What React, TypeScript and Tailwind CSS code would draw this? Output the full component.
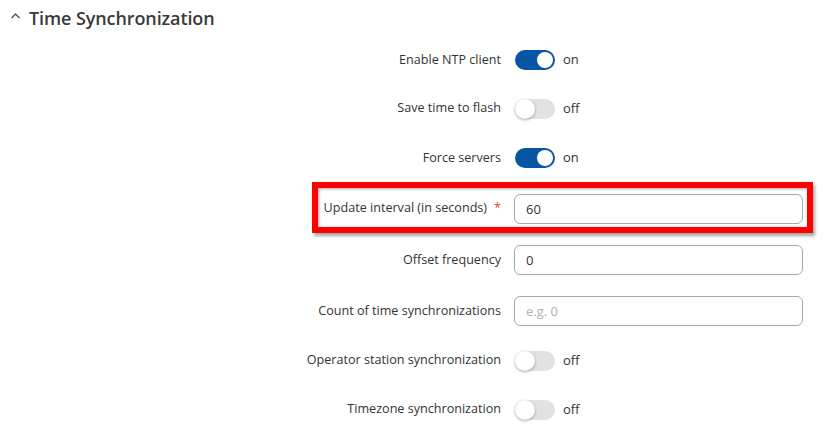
import React from 'react';

type Row =
  | { kind: 'toggle'; label: string; on: boolean; h: string }
  | { kind: 'input'; label: string; value?: string; placeholder?: string; required?: boolean; highlight?: boolean; h: string };

const rows: Row[] = [
  { kind: 'toggle', label: 'Enable NTP client', on: true, h: 'h-[48px]' },
  { kind: 'toggle', label: 'Save time to flash', on: false, h: 'h-[49px]' },
  { kind: 'toggle', label: 'Force servers', on: true, h: 'h-[50px]' },
  { kind: 'input', label: 'Update interval (in seconds)', value: '60', required: true, highlight: true, h: 'h-[51px]' },
  { kind: 'input', label: 'Offset frequency', value: '0', h: 'h-[52px]' },
  { kind: 'input', label: 'Count of time synchronizations', placeholder: 'e.g. 0', h: 'h-[50px]' },
  { kind: 'toggle', label: 'Operator station synchronization', on: false, h: 'h-[49px]' },
  { kind: 'toggle', label: 'Timezone synchronization', on: false, h: 'h-[49px]' },
];

const Toggle = ({ on }: { on: boolean }) => (
  <div className="flex items-center gap-2">
    {on ? (
      <div className="w-[40px] h-[20px] rounded-full bg-[#0756a3] flex items-center justify-end px-[2px]">
        <div className="w-[16px] h-[16px] rounded-full bg-white" />
      </div>
    ) : (
      <div className="w-[40px] h-[20px] rounded-full bg-[#e2e2e2] flex items-center">
        <div className="w-[20px] h-[20px] rounded-full bg-white shadow-[0_1px_3px_rgba(0,0,0,0.35)]" />
      </div>
    )}
    <span className="text-[13px] text-[#333]">{on ? 'on' : 'off'}</span>
  </div>
);

export default function App() {
  return (
    <div className="w-[826px] h-[444px] bg-white overflow-hidden text-[#333]" style={{ fontFamily: '"Open Sans", sans-serif' }}>
      <div className="h-[36px] flex items-center pl-[10px] gap-[8px]">
        <svg width="11" height="8" viewBox="0 0 11 8" className="mt-[-4px]">
          <path d="M1.5 6 L5.5 2 L9.5 6" fill="none" stroke="#444" strokeWidth="1.2" />
        </svg>
        <h2 className="text-[18px] font-semibold text-[#3a3a3a] tracking-[-0.1px]">Time Synchronization</h2>
      </div>

      <div className="flex flex-col">
        {rows.map((row, i) => (
          <div key={i} className={`relative flex items-center ${row.h}`}>
            {row.kind === 'input' && row.highlight && (
              <div className="absolute left-[312px] top-[-1px] w-[501px] h-[51px] border-[6px] border-[#ff0000] shadow-[2px_3px_3px_rgba(0,0,0,0.35),inset_1px_1px_3px_rgba(0,0,0,0.35)] pointer-events-none" />
            )}
            <div className="w-[501px] text-right text-[12.6px] text-[#333] whitespace-nowrap">
              {row.label}
              {row.kind === 'input' && row.required && <span className="text-[#e4412b] ml-[7px]">*</span>}
            </div>
            <div className="ml-[14px]">
              {row.kind === 'toggle' ? (
                <Toggle on={row.on} />
              ) : (
                <input
                  readOnly
                  value={row.value ?? ''}
                  placeholder={row.placeholder}
                  className="ml-[-1px] w-[289px] h-[30px] rounded-[6px] border border-[#a8a8a8] bg-white px-[11px] text-[13px] text-[#333] placeholder:text-[#b0b0b0] outline-none"
                  style={{ fontFamily: '"Open Sans", sans-serif' }}
                />
              )}
            </div>
          </div>
        ))}
      </div>
    </div>
  );
}
